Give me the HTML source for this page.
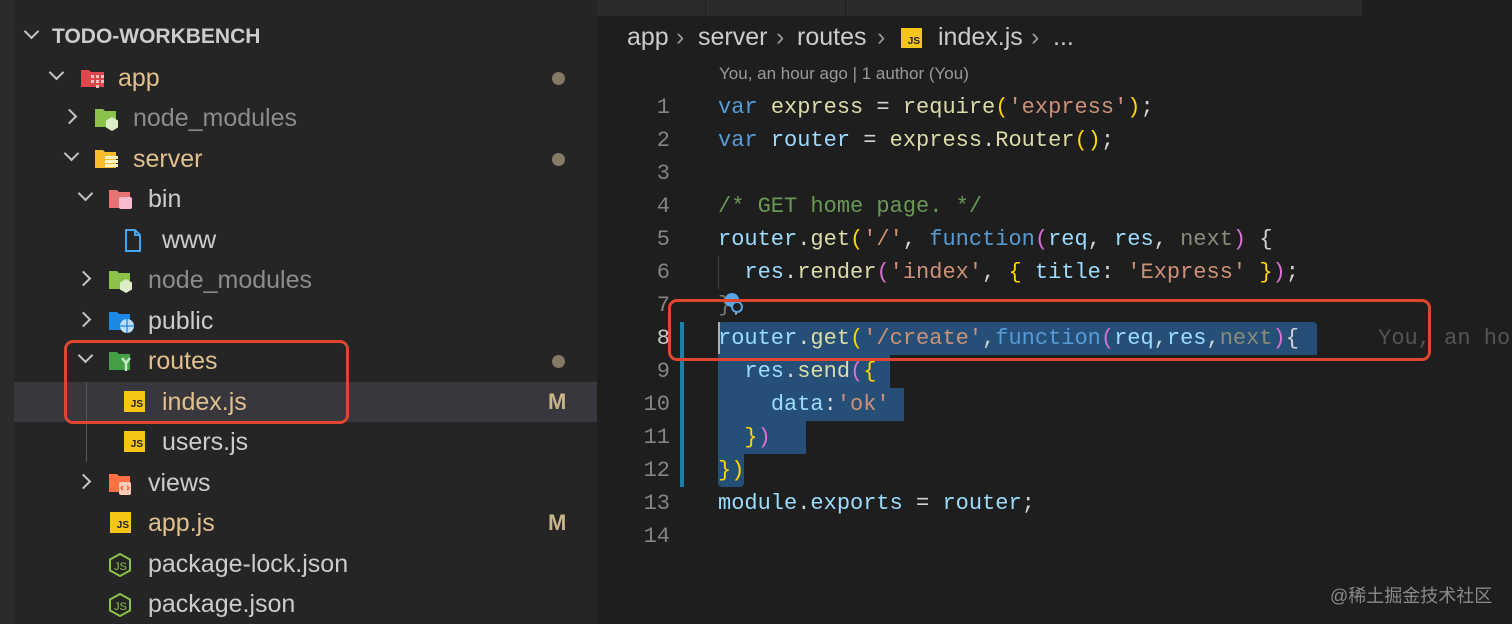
<!DOCTYPE html>
<html><head><meta charset="utf-8"><style>
*{margin:0;padding:0;box-sizing:border-box}
body{width:1512px;height:624px;background:#1e1e1e;position:relative;overflow:hidden;font-family:"Liberation Sans",sans-serif}
.side{position:absolute;left:14px;top:0;width:583px;height:624px;background:#252526}
.strip{position:absolute;left:0;top:0;width:14px;height:624px;background:#2b2b2b}
.row{position:absolute;left:14px;width:583px;height:40px;font-size:25px;color:#cccccc;line-height:40px}
.row span.t{position:absolute;top:0}
.chev{position:absolute;top:13px;width:11px;height:11px;border-right:2px solid #c5c5c5;border-bottom:2px solid #c5c5c5}
.down{transform:rotate(45deg);top:9px}
.right{transform:rotate(-45deg)}
.dot{position:absolute;left:538px;top:14px;width:13px;height:13px;border-radius:50%;background:#857a66}
.M{position:absolute;left:534px;top:0;color:#c9b58a;font-size:22px;font-weight:bold}
.ic{position:absolute;top:9px}
.js{position:absolute;top:9px;width:21px;height:21px;background:#f5c518;color:#222;font-size:10px;font-weight:bold;line-height:28px;text-align:right;padding-right:2px}
.code{position:absolute;left:0;font-family:"Liberation Mono",monospace;font-size:22px;line-height:33px;white-space:pre;color:#d4d4d4}
.ln{position:absolute;left:600px;width:70px;text-align:right;font-family:"Liberation Mono",monospace;font-size:22px;line-height:33px;color:#858585}
.k{color:#569cd6}.f{color:#dcdcaa}.v{color:#9cdcfe}.s{color:#ce9178}.c{color:#6a9955}.y{color:#ffd700}.p{color:#da70d6}.g{color:#8b8b7a}
.sel{position:absolute;background:#264f78}
.red{position:absolute;border:3px solid #e0452f;border-radius:9px}
.bc{position:absolute;top:23px;font-size:25px;color:#cccccc;white-space:pre}
</style></head><body>
<div class="strip"></div>
<div class="side"></div>
<div class="row" style="top:17px"><div class="chev down" style="left:12px"></div><span class="t" style="left:38px;font-weight:bold;font-size:21px;color:#cccccc">TODO-WORKBENCH</span></div>

<div class="row" style="top:58px"><div class="chev down" style="left:37px"></div>
<svg class="ic" style="left:66px" width="26" height="22"><path d="M1 3h8l2 2h13v15H1z" fill="#e0474c"/><g fill="#f7c0c0"><rect x="11" y="8" width="3" height="3"/><rect x="16" y="8" width="3" height="3"/><rect x="21" y="8" width="3" height="3"/><rect x="11" y="13" width="3" height="3"/><rect x="16" y="13" width="3" height="3"/><rect x="21" y="13" width="3" height="3"/><rect x="16" y="18" width="3" height="3"/></g></svg>
<span class="t" style="left:104px;color:#e2c08d">app</span><div class="dot"></div></div>

<div class="row" style="top:98px"><div class="chev right" style="left:50px"></div>
<svg class="ic" style="left:80px" width="26" height="24"><path d="M1 2h8l2 2h11v16H1z" fill="#8bc34a"/><path d="M18 10l6 3.5v7L18 24l-6-3.5v-7z" fill="#dcedc8"/></svg>
<span class="t" style="left:119px;color:#8c8c8c">node_modules</span></div>

<div class="row" style="top:139px"><div class="chev down" style="left:52px"></div>
<svg class="ic" style="left:80px" width="26" height="22"><path d="M1 2h8l2 2h11v16H1z" fill="#f9bd2b"/><rect x="11" y="8" width="13" height="3" fill="#fff3c4"/><rect x="11" y="12" width="13" height="3" fill="#fff3c4"/><rect x="11" y="16" width="13" height="3" fill="#fff3c4"/></svg>
<span class="t" style="left:119px;color:#e2c08d">server</span><div class="dot"></div></div>

<div class="row" style="top:179px"><div class="chev down" style="left:66px"></div>
<svg class="ic" style="left:94px" width="26" height="22"><path d="M1 2h8l2 2h11v16H1z" fill="#e57373"/><rect x="11" y="9" width="13" height="12" rx="2" fill="#f8bbd0"/></svg>
<span class="t" style="left:134px">bin</span></div>

<div class="row" style="top:220px">
<svg class="ic" style="left:110px" width="18" height="24"><path d="M2 1h9l5 5v16H2z M11 1v5h5" fill="none" stroke="#42a5f5" stroke-width="2"/></svg>
<span class="t" style="left:148px">www</span></div>

<div class="row" style="top:260px"><div class="chev right" style="left:64px"></div>
<svg class="ic" style="left:94px" width="26" height="24"><path d="M1 2h8l2 2h11v16H1z" fill="#8bc34a"/><path d="M18 10l6 3.5v7L18 24l-6-3.5v-7z" fill="#dcedc8"/></svg>
<span class="t" style="left:134px;color:#8c8c8c">node_modules</span></div>

<div class="row" style="top:301px"><div class="chev right" style="left:64px"></div>
<svg class="ic" style="left:94px" width="28" height="24"><path d="M1 2h8l2 2h11v16H1z" fill="#1e88e5"/><circle cx="19" cy="16" r="7" fill="#bbdefb"/><path d="M12 16h14M19 9v14" stroke="#1e88e5" stroke-width="1.3"/></svg>
<span class="t" style="left:134px">public</span></div>

<div class="row" style="top:341px"><div class="chev down" style="left:66px"></div>
<svg class="ic" style="left:94px" width="26" height="22"><path d="M1 2h8l2 2h11v16H1z" fill="#43a047"/><path d="M14 8l4 5 4-5M18 13v8" stroke="#c8e6c9" stroke-width="2.5" fill="none"/></svg>
<span class="t" style="left:134px;color:#e2c08d">routes</span><div class="dot"></div></div>

<div class="row" style="top:382px;background:#37373d"><div style="position:absolute;left:72px;top:0;width:1px;height:40px;background:#585858"></div>
<div class="js" style="left:110px">JS</div>
<span class="t" style="left:148px;color:#e2c08d">index.js</span><span class="M">M</span></div>

<div class="row" style="top:422px"><div style="position:absolute;left:72px;top:0;width:1px;height:40px;background:#585858"></div>
<div class="js" style="left:110px">JS</div>
<span class="t" style="left:148px">users.js</span></div>

<div class="row" style="top:463px"><div class="chev right" style="left:64px"></div>
<svg class="ic" style="left:94px" width="26" height="24"><path d="M1 2h8l2 2h11v16H1z" fill="#ff7043"/><rect x="11" y="10" width="12" height="13" rx="2" fill="#ffccbc"/><path d="M15 14l-2 2 2 2M19 14l2 2-2 2" stroke="#ff5722" fill="none" stroke-width="1.3"/></svg>
<span class="t" style="left:134px">views</span></div>

<div class="row" style="top:503px">
<div class="js" style="left:96px">JS</div>
<span class="t" style="left:134px;color:#e2c08d">app.js</span><span class="M">M</span></div>

<div class="row" style="top:544px">
<svg class="ic" style="left:94px" width="24" height="24"><path d="M12 1l10 5.5v11L12 23 2 17.5v-11z" fill="none" stroke="#8bc34a" stroke-width="2"/><text x="6" y="17" font-size="11" fill="#8bc34a" font-family="Liberation Sans">JS</text></svg>
<span class="t" style="left:134px">package-lock.json</span></div>

<div class="row" style="top:584px">
<svg class="ic" style="left:94px" width="24" height="24"><path d="M12 1l10 5.5v11L12 23 2 17.5v-11z" fill="none" stroke="#8bc34a" stroke-width="2"/><text x="6" y="17" font-size="11" fill="#8bc34a" font-family="Liberation Sans">JS</text></svg>
<span class="t" style="left:134px">package.json</span></div>

<div class="red" style="left:64px;top:340px;width:285px;height:84px"></div>

<div style="position:absolute;left:597px;top:0;width:765px;height:16px;background:#2b2b2b"></div>
<div style="position:absolute;left:705px;top:0;width:1px;height:16px;background:#1e1e1e"></div>
<div style="position:absolute;left:845px;top:0;width:1px;height:16px;background:#1e1e1e"></div>

<div class="bc" style="left:627px">app</div>
<div class="bc" style="left:676px;color:#999">›</div>
<div class="bc" style="left:698px">server</div>
<div class="bc" style="left:776px;color:#999">›</div>
<div class="bc" style="left:797px">routes</div>
<div class="bc" style="left:877px;color:#999">›</div>
<div class="js" style="left:901px;top:28px;width:21px;height:20px">JS</div>
<div class="bc" style="left:938px">index.js</div>
<div class="bc" style="left:1031px;color:#999">›</div>
<div class="bc" style="left:1053px">...</div>

<div style="position:absolute;left:719px;top:64px;font-size:17px;color:#9a9a9a">You, an hour ago | 1 author (You)</div>

<div class="sel" style="left:718px;top:322px;width:599px;height:33px;border-radius:4px 4px 0 0"></div>
<div class="sel" style="left:718px;top:355px;width:172px;height:33px"></div>
<div class="sel" style="left:718px;top:388px;width:186px;height:33px"></div>
<div class="sel" style="left:718px;top:421px;width:88px;height:33px"></div>
<div class="sel" style="left:718px;top:454px;width:26px;height:33px;border-radius:0 0 4px 4px"></div>
<div style="position:absolute;left:680px;top:322px;width:4px;height:165px;background:#1b81a8"></div>
<div style="position:absolute;left:718px;top:322px;width:2px;height:32px;background:#aeafad"></div>
<div style="position:absolute;left:718px;top:256px;width:1px;height:33px;background:#404040"></div>

<div class="ln" style="top:91px">1<br>2<br>3<br>4<br>5<br>6<br>7<br><span style="color:#c6c6c6">8</span><br>9<br>10<br>11<br>12<br>13<br>14</div>

<div class="code" style="left:718px;top:91px"><span class="k">var</span> <span class="f">express</span> = <span class="f">require</span><span class="y">(</span><span class="s">'express'</span><span class="y">)</span>;
<span class="k">var</span> <span class="v">router</span> = <span class="f">express</span>.<span class="f">Router</span><span class="y">()</span>;

<span class="c">/* GET home page. */</span>
<span class="v">router</span>.<span class="f">get</span><span class="y">(</span><span class="s">'/'</span>, <span class="k">function</span><span class="p">(</span><span class="v">req</span>, <span class="v">res</span>, <span class="g">next</span><span class="p">)</span> {
  <span class="v">res</span>.<span class="f">render</span><span class="p">(</span><span class="s">'index'</span>, <span class="y">{</span> <span class="v">title</span>: <span class="s">'Express'</span> <span class="y">}</span><span class="p">)</span>;
<span style="color:#777">}</span>;
<span class="v">router</span>.<span class="f">get</span><span class="y">(</span><span class="s">'/create'</span>,<span class="k">function</span><span class="p">(</span><span class="v">req</span>,<span class="v">res</span>,<span class="g">next</span><span class="p">)</span>{      <span style="color:#555">You, an ho</span>
  <span class="v">res</span>.<span class="f">send</span><span class="p">(</span><span class="y">{</span>
    <span class="v">data</span>:<span class="s">'ok'</span>
  <span class="y">}</span><span class="p">)</span>
<span class="y">})</span>
<span class="v">module</span>.<span class="v">exports</span> = <span class="v">router</span>;</div>
<svg style="position:absolute;left:722px;top:291px" width="24" height="24"><circle cx="10" cy="9" r="7" fill="#5aa5e6"/><circle cx="15" cy="16" r="5" fill="#1e1e1e" stroke="#5aa5e6" stroke-width="2"/></svg>

<div class="red" style="left:668px;top:299px;width:763px;height:62px"></div>

<div style="position:absolute;left:1330px;top:582px;font-size:18px;color:#8a8a8a;font-family:'Liberation Sans','Noto Sans CJK SC',sans-serif">@稀土掘金技术社区</div>
</body></html>
